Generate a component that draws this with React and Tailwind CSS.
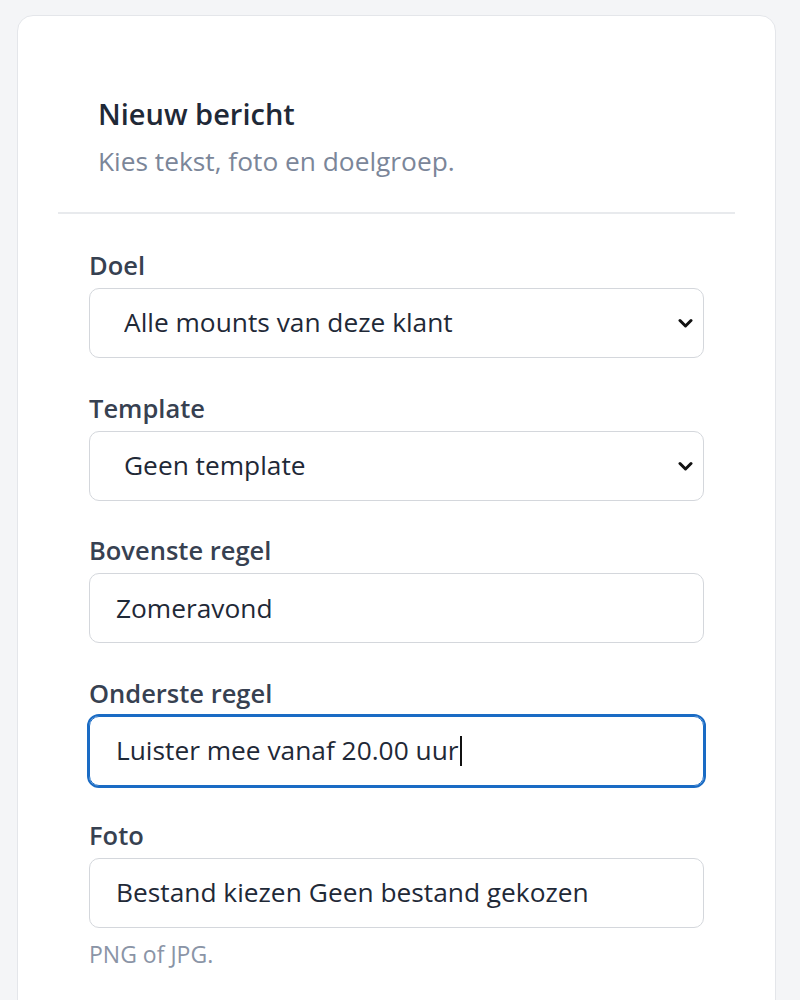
import React from "react";

function Chevron() {
  return (
    <svg className="pointer-events-none absolute right-[11px] top-1/2 -translate-y-1/2" width="15" height="10" viewBox="0 0 15 10" fill="none">
      <path d="M2 2.5 L7.5 8 L13 2.5" stroke="#111" strokeWidth="3" strokeLinecap="round" strokeLinejoin="round" />
    </svg>
  );
}

function Label({ children }) {
  return <div className="text-[25.5px] leading-[30px] font-semibold text-[#374151]">{children}</div>;
}

function SelectField({ label, value }) {
  return (
    <div className="flex flex-col gap-[8px]">
      <Label>{label}</Label>
      <div className="relative">
        <select
          defaultValue={value}
          className="block h-[70px] w-full appearance-none rounded-[10px] border border-[#d4d7dc] bg-white pl-[34px] pr-10 text-[26.3px] text-[#1f2937] outline-none"
        >
          <option>{value}</option>
        </select>
        <Chevron />
      </div>
    </div>
  );
}

function InputField({ label, value }) {
  return (
    <div className="flex flex-col gap-[8px]">
      <Label>{label}</Label>
      <input
        readOnly
        value={value}
        className="block h-[70px] w-full rounded-[10px] border border-[#d4d7dc] bg-white px-[26px] text-[26.3px] text-[#1f2937] outline-none"
      />
    </div>
  );
}

export default function App() {
  return (
    <div className="min-h-[1000px] bg-[#f4f5f7] pl-[17px] pr-[24px] pt-[15px]" style={{ fontFamily: '"Open Sans", sans-serif' }}>
      <div className="h-[1000px] rounded-t-[16px] border border-[#e4e6ea] bg-white px-[40px] pt-[80px]">
        <div className="px-[40px] pb-[34px]">
          <h1 className="text-[29px] leading-[36px] font-semibold text-[#1f2937]">Nieuw bericht</h1>
          <p className="mt-[12px] text-[26.3px] leading-[34px] text-[#7b8699]">Kies tekst, foto en doelgroep.</p>
        </div>
        <div className="h-[2px] bg-[#e8eaed]" />
        <div className="flex flex-col gap-[34.5px] px-[31px] pt-[36px]">
          <SelectField label="Doel" value="Alle mounts van deze klant" />
          <SelectField label="Template" value="Geen template" />
          <InputField label="Bovenste regel" value="Zomeravond" />
          <div className="flex flex-col gap-[8px]">
            <Label>Onderste regel</Label>
            <div className="flex h-[70px] w-full items-center rounded-[10px] border border-[#1a6bc4] bg-white px-[26px] text-[26.3px] text-[#1f2937] outline-2 outline-[#1a6bc4]">
              <span>Luister mee vanaf 20.00 uur</span>
              <span className="ml-[1px] inline-block h-[30px] w-[2px] bg-[#111]" />
            </div>
          </div>
          <div className="flex flex-col gap-[8px]">
            <Label>Foto</Label>
            <div className="flex h-[70px] w-full items-center gap-[7px] rounded-[10px] border border-[#d4d7dc] bg-white px-[26px] text-[26.3px] text-[#1f2937]">
              <span>Bestand kiezen</span>
              <span>Geen bestand gekozen</span>
            </div>
            <div className="mt-[3px] text-[23px] leading-[30px] text-[#8a94a6]">PNG of JPG.</div>
          </div>
        </div>
      </div>
    </div>
  );
}
